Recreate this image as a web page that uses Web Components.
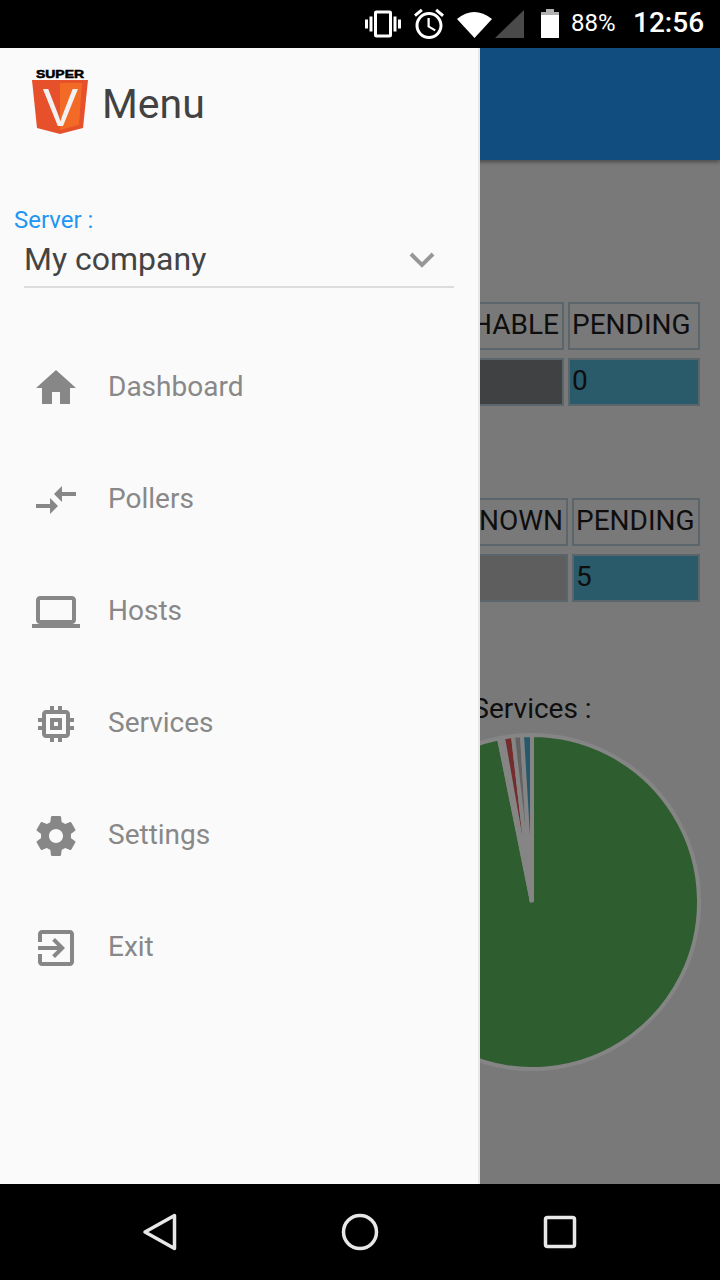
<!DOCTYPE html>
<html>
<head>
<meta charset="utf-8">
<style>
  html, body { margin: 0; padding: 0; background: #000; }
  body { width: 720px; height: 1280px; overflow: hidden; font-family: Roboto, sans-serif; }
</style>
</head>
<body>
<app-shell>
  <status-bar slot="status"></status-bar>
  <dash-board slot="content"></dash-board>
  <side-drawer slot="drawer">
    <drawer-item label="Dashboard" icon="M10 20v-6h4v6h5v-8h3L12 3 2 12h3v8z"></drawer-item>
    <drawer-item label="Pollers" icon="M9.01 14H2v2h7.01v3L13 15l-3.99-4v3zm5.98-1v-3H22V8h-7.01V5L11 9l3.99 4z"></drawer-item>
    <drawer-item label="Hosts" icon="M20 18c1.1 0 1.99-.9 1.99-2L22 6c0-1.1-.9-2-2-2H4c-1.1 0-2 .9-2 2v10c0 1.1.9 2 2 2H0v2h24v-2h-4zM4 6h16v10H4V6z"></drawer-item>
    <drawer-item label="Services" icon="M15 9H9v6h6V9zm-2 4h-2v-2h2v2zm8-2V9h-2V7c0-1.1-.9-2-2-2h-2V3h-2v2h-2V3H9v2H7c-1.1 0-2 .9-2 2v2H3v2h2v2H3v2h2v2c0 1.1.9 2 2 2h2v2h2v-2h2v2h2v-2h2c1.1 0 2-.9 2-2v-2h2v-2h-2v-2h2zm-4 6H7V7h10v10z"></drawer-item>
    <drawer-item label="Settings" icon="M19.43 12.98c.04-.32.07-.64.07-.98s-.03-.66-.07-.98l2.11-1.65c.19-.15.24-.42.12-.64l-2-3.46c-.12-.22-.39-.3-.61-.22l-2.49 1c-.52-.4-1.08-.73-1.69-.98l-.38-2.65C14.46 2.18 14.25 2 14 2h-4c-.25 0-.46.18-.49.42l-.38 2.65c-.61.25-1.17.59-1.69.98l-2.49-1c-.23-.09-.49 0-.61.22l-2 3.46c-.13.22-.07.49.12.64l2.11 1.65c-.04.32-.07.65-.07.98s.03.66.07.98l-2.11 1.65c-.19.15-.24.42-.12.64l2 3.46c.12.22.39.3.61.22l2.49-1c.52.4 1.08.73 1.69.98l.38 2.65c.03.24.24.42.49.42h4c.25 0 .46-.18.49-.42l.38-2.65c.61-.25 1.17-.59 1.69-.98l2.49 1c.23.09.49 0 .61-.22l2-3.46c.12-.22.07-.49-.12-.64l-2.11-1.65zM12 15.5c-1.93 0-3.5-1.57-3.5-3.5s1.57-3.5 3.5-3.5 3.5 1.57 3.5 3.5-1.57 3.5-3.5 3.5z"></drawer-item>
    <drawer-item label="Exit" icon="M10.09 15.59L11.5 17l5-5-5-5-1.41 1.41L12.67 11H3v2h9.67l-2.58 2.59zM19 3H5c-1.11 0-2 .9-2 2v4h2V5h14v14H5v-4H3v4c0 1.1.89 2 2 2h14c1.1 0 2-.9 2-2V5c0-1.1-.9-2-2-2z"></drawer-item>
  </side-drawer>
  <nav-bar slot="nav"></nav-bar>
</app-shell>

<script>
// ----------------------- SHELL -----------------------
class AppShell extends HTMLElement {
  constructor() {
    super();
    this.attachShadow({ mode: "open" });
    this.shadowRoot.innerHTML = `
      <style>
        :host { display: flex; flex-direction: column; width: 720px; height: 1280px; }
        .middle { position: relative; flex: 1; overflow: hidden; background: #797979; }
        /* drawer lies over the dashboard */
        .over { position: absolute; left: 0; top: 0; bottom: 0; width: 480px; }
      </style>
      <slot name="status"></slot>
      <div class="middle">
        <slot name="content"></slot>
        <div class="over"><slot name="drawer"></slot></div>
      </div>
      <slot name="nav"></slot>
    `;
  }
}

// ----------------------- STATUS BAR -----------------------
class StatusBar extends HTMLElement {
  constructor() {
    super();
    this.attachShadow({ mode: "open" });
    this.shadowRoot.innerHTML = `
      <style>
        :host { display: flex; align-items: center; height: 48px; background: #000; color: #fff; padding-left: 365px; box-sizing: border-box; }
        svg { display: block; flex: none; fill: #fff; }
        .pct { font-size: 24px; margin: 0 0 3px 11px; width: 44px; white-space: nowrap; }
        .time { font-size: 28px; font-weight: 500; margin: 0 0 3px 18px; white-space: nowrap; }
      </style>
      <svg width="36" height="36" viewBox="0 0 24 24"><path d="M0 15h2V9H0v6zm3 2h2V7H3v10zm19-8v6h2V9h-2zm-3 8h2V7h-2v10zM16.5 3h-9C6.67 3 6 3.67 6 4.5v15c0 .83.67 1.5 1.5 1.5h9c.83 0 1.5-.67 1.5-1.5v-15c0-.83-.67-1.5-1.5-1.5zM16 19H8V5h8v14z"/></svg>
      <svg style="margin-left:10px" width="36" height="36" viewBox="0 0 24 24"><path d="M22 5.72l-4.6-3.86-1.29 1.53 4.6 3.86L22 5.72zM7.88 3.39L6.6 1.86 2 5.71l1.29 1.53 4.59-3.85zM12.5 8H11v6l4.75 2.85.75-1.23-4-2.37V8zM12 4c-4.97 0-9 4.03-9 9s4.03 9 9 9 9-4.03 9-9-4.03-9-9-9zm0 16c-3.87 0-7-3.13-7-7s3.13-7 7-7 7 3.13 7 7-3.13 7-7 7z"/></svg>
      <svg style="margin-left:10px" width="68" height="36" viewBox="0 0 68 36">
        <path d="M0 13 Q17 -1 35 13 L17.500 32 Z"/>
        <path d="M67 4 V32 H38 Z" fill="#4a4a4a"/>
      </svg>
      <svg style="margin-left:15px" width="20" height="36" viewBox="0 0 20 36">
        <path d="M6 3h8v3h5v4H1V6h5z" fill="#b0b0b0"/>
        <path d="M1 9h18v23H1z"/>
      </svg>
      <span class="pct">88%</span>
      <span class="time">12:56</span>
    `;
  }
}

// ----------------------- DASHBOARD BEHIND THE DRAWER -----------------------
class StatTable extends HTMLElement {
  constructor() {
    super();
    this.attachShadow({ mode: "open" });
    const [first, second] = this.getAttribute("heads").split(",");
    const [a, b] = this.getAttribute("values").split(",");
    this.shadowRoot.innerHTML = `
      <style>
        :host { display: grid; grid-template-columns: ${this.getAttribute("cols")}; grid-auto-rows: 48px; gap: 8px 4px; justify-content: end; color: #0e0e0e; font-size: 28px; }
        div { border: 2px solid #5b656c; box-sizing: border-box; padding: 0 2px 4px 2px; display: flex; align-items: center; white-space: nowrap; overflow: hidden; }
        .end { justify-content: flex-end; padding-right: 3px; }
        .teal { background: #2a5b6a; }
      </style>
      <div class="end">${first}</div><div>${second}</div>
      <div style="background:${this.getAttribute("shade")}">${a}</div><div class="teal">${b}</div>
    `;
  }
}

class PieChart extends HTMLElement {
  constructor() {
    super();
    this.attachShadow({ mode: "open" });
    // wedges as x offsets at the rim, counted from the top of the circle
    const r = 167;
    const pt = (dx) => `${dx} ${-Math.sqrt(r * r - dx * dx)}`;
    const wedge = (from, to, color) =>
      `<path d="M0 0L${pt(from)}A${r} ${r} 0 0 1 ${pt(to)}Z" fill="${color}"/>`;
    this.shadowRoot.innerHTML = `
      <style>
        :host { display: block; width: 340px; height: 340px; }
        svg { display: block; }
      </style>
      <svg width="340" height="340" viewBox="-170 -170 340 340">
        <g stroke="#858585" stroke-width="4" stroke-linejoin="bevel">
          <path d="M0 0L0 ${-r}A${r} ${r} 0 1 1 ${pt(-33)}Z" fill="#2e5d2f"/>
          ${wedge(-33, -29, "#858585")}
          ${wedge(-29, -19, "#742c2c")}
          ${wedge(-19, -10, "#626262")}
          ${wedge(-10, 0, "#27596b")}
        </g>
      </svg>
    `;
  }
}

class DashBoard extends HTMLElement {
  constructor() {
    super();
    this.attachShadow({ mode: "open" });
    this.shadowRoot.innerHTML = `
      <style>
        :host { display: block; color: #0e0e0e; }
        header { height: 112px; background: #124d7f; box-shadow: 0 2px 4px rgba(0,0,0,.4); }
        .body { display: flex; flex-direction: column; align-items: flex-end; padding: 142px 20px 0 0; }
        stat-table + stat-table { margin-top: 92px; }
        .title { font-size: 28px; line-height: 33px; margin-top: 90px; width: 340px; text-align: center; margin-right: -2px; }
        pie-chart { margin-top: 7px; margin-right: -2px; }
      </style>
      <header></header>
      <div class="body">
        <stat-table cols="244px 132px" heads="UNREACHABLE,PENDING" values=",0" shade="#404142"></stat-table>
        <stat-table cols="190px 128px" heads="UNKNOWN,PENDING" values=",5" shade="#5e5e5e"></stat-table>
        <div class="title">Services :</div>
        <pie-chart></pie-chart>
      </div>
    `;
  }
}

// ----------------------- DRAWER -----------------------
class SideDrawer extends HTMLElement {
  constructor() {
    super();
    this.attachShadow({ mode: "open" });
    this.shadowRoot.innerHTML = `
      <style>
        :host { display: flex; flex-direction: column; height: 1136px; background: #fafafa; box-shadow: inset -2px 0 0 #e8e8e8; }
        .top { display: flex; align-items: center; padding: 20px 0 0 32px; height: 68px; }
        .top svg { display: block; flex: none; }
        .top span { font-size: 41px; color: #424242; margin-left: 14px; position: relative; top: 2px; }
        .server { padding: 70px 26px 0 14px; }
        label { display: block; font-size: 24px; line-height: 28px; color: #2196f3; }
        .select { display: flex; align-items: center; justify-content: space-between; margin-left: 10px; height: 52px; border-bottom: 2px solid #dcdcdc; font-size: 32px; color: #444; }
        .select span { position: relative; top: -1px; }
        .select svg { margin-right: 18px; display: block; }
        .items { padding-top: 44px; }
      </style>
      <div class="top">
        <svg width="56" height="68" viewBox="0 0 56 68">
          <text x="28" y="10" text-anchor="middle" textLength="48" lengthAdjust="spacingAndGlyphs" font-family="Liberation Sans, sans-serif" font-weight="700" font-size="11" stroke="#000" stroke-width=".5">SUPER</text>
          <path d="M0 12H56L51 60L28 66L5 60Z" fill="#e6502a"/>
          <path d="M28 15H50L47 57L28 62Z" fill="#f36a26"/>
          <text x="28.500" y="58" text-anchor="middle" font-family="Liberation Sans, sans-serif" font-size="53" fill="#f2f2f2">V</text>
        </svg>
        <span>Menu</span>
      </div>
      <div class="server">
        <label>Server :</label>
        <div class="select">
          <span>My company</span>
          <svg width="28" height="18" viewBox="0 0 28 18"><path d="M3 3L14 14L25 3" fill="none" stroke="#979797" stroke-width="4"/></svg>
        </div>
      </div>
      <div class="items"><slot></slot></div>
    `;
  }
}

class DrawerItem extends HTMLElement {
  constructor() {
    super();
    this.attachShadow({ mode: "open" });
    this.shadowRoot.innerHTML = `
      <style>
        :host { display: flex; align-items: center; height: 112px; padding-left: 32px; gap: 28px; color: #888; font-size: 28px; }
        svg { display: block; flex: none; fill: #878787; }
        span { position: relative; top: -2px; }
      </style>
      <svg width="48" height="48" viewBox="0 0 24 24"><path d="${this.getAttribute("icon")}"/></svg>
      <span>${this.getAttribute("label")}</span>
    `;
  }
}

// ----------------------- NAV BAR -----------------------
class NavBar extends HTMLElement {
  constructor() {
    super();
    this.attachShadow({ mode: "open" });
    this.shadowRoot.innerHTML = `
      <style>
        :host { display: flex; align-items: center; justify-content: center; gap: 152px; height: 96px; background: #000; }
        svg { display: block; fill: none; stroke: #e8e8e8; stroke-width: 3.500; stroke-linejoin: round; }
      </style>
      <svg width="48" height="48" viewBox="0 0 48 48"><path d="M9 24L38.500 7.500V40.500Z"/></svg>
      <svg width="48" height="48" viewBox="0 0 48 48"><circle cx="24" cy="24" r="16.500"/></svg>
      <svg width="48" height="48" viewBox="0 0 48 48"><rect x="9.500" y="9.500" width="29" height="29" rx="2"/></svg>
    `;
  }
}

customElements.define("app-shell", AppShell);
customElements.define("status-bar", StatusBar);
customElements.define("stat-table", StatTable);
customElements.define("pie-chart", PieChart);
customElements.define("dash-board", DashBoard);
customElements.define("side-drawer", SideDrawer);
customElements.define("drawer-item", DrawerItem);
customElements.define("nav-bar", NavBar);
</script>
</body>
</html>
